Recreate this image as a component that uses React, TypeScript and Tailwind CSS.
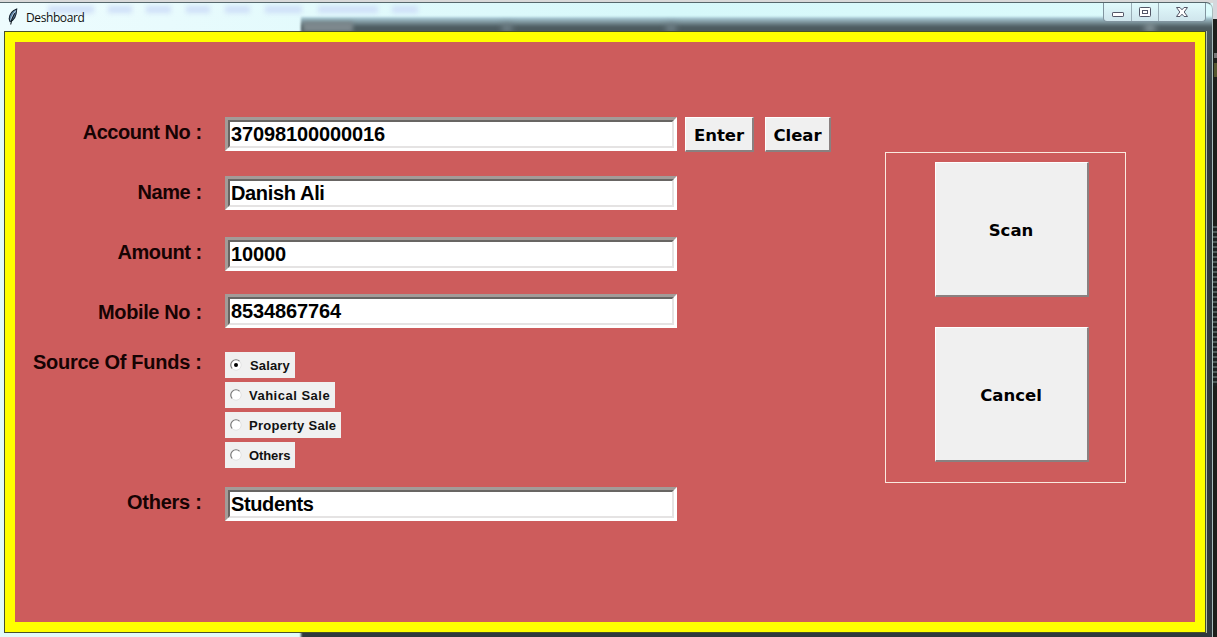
import { useState } from "react";

const labels = [
  { text: "Account No :", cls: "mt-[78px] tracking-[-0.45px]" },
  { text: "Name :", cls: "mt-9 tracking-[-0.4px]" },
  { text: "Amount :", cls: "mt-9 tracking-[-0.45px]" },
  { text: "Mobile No :", cls: "mt-9 tracking-[-0.37px]" },
  { text: "Source Of Funds :", cls: "mt-[26px] tracking-[-0.27px]" },
  { text: "Others :", cls: "mt-[116px] tracking-[-0.25px]" },
];

const sources = [
  { text: "Salary", cls: "w-[70px]", textCls: "ml-[8px] tracking-[0.15px]" },
  { text: "Vahical Sale", cls: "w-[110px]", textCls: "ml-[7px] tracking-[0.5px]" },
  { text: "Property Sale", cls: "w-[116px]", textCls: "ml-[7px] tracking-[0.27px]" },
  { text: "Others", cls: "w-[70px]", textCls: "ml-[7px] tracking-[-0.1px]" },
];

const menuGhosts = [
  "ml-[48px] w-[46px]",
  "ml-[14px] w-[24px]",
  "ml-[14px] w-[25px]",
  "ml-[15px] w-[24px]",
  "ml-[15px] w-[25px]",
  "ml-[15px] w-[37px]",
  "ml-[16px] w-[60px]",
  "ml-[14px] w-[26px]",
];

function Entry({ value, className, textClass }: { value: string; className: string; textClass: string }) {
  return (
    <div className={`h-[34px] w-[452px] border-[3px] border-t-[#a39b98] border-l-[#a39b98] border-r-white border-b-white ${className}`}>
      <div className="h-full border-2 border-t-[#686563] border-l-[#686563] border-r-[#e5e3e3] border-b-[#e5e3e3]">
        <input
          defaultValue={value}
          className={`block h-full w-full bg-white pl-px text-[20px] leading-6 font-bold text-black outline-none ${textClass}`}
        />
      </div>
    </div>
  );
}

function PushButton({ text, className }: { text: string; className: string }) {
  return (
    <button
      className={`flex items-center justify-center border-t border-l border-r-2 border-b-2 border-t-white border-l-white border-r-[#8a8080] border-b-[#8a8080] bg-[#f0f0f0] pt-[3px] font-['DejaVu_Sans',sans-serif] text-[16.5px] leading-5 font-bold text-black ${className}`}
    >
      {text}
    </button>
  );
}

function Radio({ checked }: { checked: boolean }) {
  return (
    <svg width="12" height="12" viewBox="0 0 12 12" className="ml-[5px]">
      <circle cx="6" cy="6" r="5" fill="#fff" />
      <path d="M2.3 9.7A5.2 5.2 0 0 1 9.7 2.3" fill="none" stroke="#777" strokeWidth="1.2" />
      <path d="M9.7 2.3A5.2 5.2 0 0 1 2.3 9.7" fill="none" stroke="#e3e3e3" strokeWidth="1" />
      {checked && <circle cx="6" cy="6" r="2" fill="#000" />}
    </svg>
  );
}

function Backdrop() {
  return (
    <div className="absolute inset-0 overflow-hidden bg-[#e2fafb]">
      <div className="absolute top-0 left-0 h-[3px] w-full bg-[#d9d9d9]" />
      <div className="absolute top-[3px] left-0 h-[29px] w-full bg-linear-to-r from-[#eefcfe] via-[#d6f8fa] via-55% to-[#dcfbfc]" />
      <div className="absolute top-[6px] left-0 flex blur-[2.5px]">
        {menuGhosts.map((g) => (
          <div key={g} className={`h-[7px] bg-[#cfdff8] ${g}`} />
        ))}
      </div>
      <div className="absolute top-[17px] left-[301px] h-[640px] w-[930px] bg-linear-to-b from-[#b3d5e1] via-[#4d5c60] via-[10px] to-[#30393e] to-[110px] blur-[1px]" />
      <div className="absolute top-[22px] left-[303px] h-[10px] w-[50px] bg-[#7e898e] blur-[2px]" />
      <div className="absolute top-[24px] left-[502px] h-[8px] w-[10px] bg-[#72828a] blur-[3px]" />
      <div className="absolute top-[24px] left-[666px] h-[8px] w-[10px] bg-[#72828a] blur-[3px]" />
      <div className="absolute top-[24px] left-[1145px] h-[8px] w-[10px] bg-[#8a999e] blur-[3px]" />
      <div className="absolute top-0 left-[1213px] h-[19px] w-1 bg-[#d5d7dc]" />
      <div className="absolute top-[19px] left-[1213px] h-[618px] w-1 bg-[#1d1f1b]" />
      <div className="absolute top-[53px] left-[1214px] h-[5px] w-[3px] bg-[#777]" />
      <div className="absolute top-[63px] left-[1214px] h-[14px] w-[3px] bg-[#56572f]" />
      <div className="absolute top-[226px] left-[1213px] h-[160px] w-1 bg-[repeating-linear-gradient(#4d5b58_0px,#4d5b58_2px,#1d2221_2px,#1d2221_5px)]" />
    </div>
  );
}

function Feather() {
  return (
    <svg width="12" height="18" viewBox="0 0 12 18" className="ml-[7px]">
      <path d="M9.7 1C5.2 2.6 2.4 6.4 2.2 10.8L3 13.5C7 12.5 9.4 7.4 9.7 1Z" fill="#5b83a8" stroke="#14202e" strokeWidth="1.1" />
      <path d="M8.8 2.6C6.4 5.4 4.6 9 3.7 12.4" fill="none" stroke="#d6e6f2" strokeWidth="0.9" />
      <path d="M7.7 5.2C5.7 8.6 4.2 12 3.7 16.5" fill="none" stroke="#101820" strokeWidth="1.1" />
    </svg>
  );
}

function Controls() {
  return (
    <div className="mr-[6px] flex h-[19px] w-[103px] rounded-b-[4px] border border-t-0 border-[#81949f] bg-linear-to-b from-[#e1fafc] to-[#cfe5ec]">
      <div className="w-7 border-r border-[#9aadb6]">
        <svg width="27" height="18" viewBox="0 0 27 18">
          <rect x="8.5" y="9.5" width="11" height="4" rx="0.6" fill="#fff" stroke="#535666" />
        </svg>
      </div>
      <div className="w-[27px] border-r border-[#9aadb6]">
        <svg width="26" height="18" viewBox="0 0 26 18">
          <rect x="7.5" y="4.5" width="11" height="9" rx="0.8" fill="#fff" stroke="#535666" />
          <rect x="10.5" y="7.5" width="5" height="3" fill="#fff" stroke="#535666" />
        </svg>
      </div>
      <svg width="46" height="18" viewBox="0 0 46 18">
        <path
          d="M17.5 4.5H21L23 6.8L25 4.5H28.5L25.2 9L28.5 13.5H25L23 11.2L21 13.5H17.5L20.8 9Z"
          fill="#fff"
          stroke="#535666"
          strokeLinejoin="round"
        />
      </svg>
    </div>
  );
}

export default function App() {
  const [source, setSource] = useState("Salary");
  return (
    <div className="relative h-[637px] w-[1217px] overflow-hidden font-['Liberation_Sans',Arial,sans-serif]">
      <Backdrop />
      <div className="relative mt-[2px] flex h-[635px] w-[1213px] flex-col rounded-tr-[7px] border-t border-r border-t-[#55666b] border-r-[#a8bcbc]">
        <div className="flex h-7 items-start justify-between">
          <div className="flex h-7 items-center">
            <Feather />
            <span className="ml-[7px] pt-px font-['Open_Sans',sans-serif] text-[12px] leading-4 tracking-[-0.4px] text-[#111]">Deshboard</span>
          </div>
          <Controls />
        </div>
        <div className="ml-1 flex h-[602px] w-[1203px] border-r border-[#b5c3a7]">
          <div className="flex h-[602px] w-[1202px] border border-[#48512c]">
            <main className="flex h-[600px] w-[1200px] border-10 border-[#ffff00] bg-[#cd5c5c]">
              <div className="flex w-[187px] flex-col items-end pr-[0.3px] text-right">
                {labels.map((l) => (
                  <label key={l.text} className={`h-6 text-[20px] leading-6 font-bold whitespace-nowrap text-[#160303] ${l.cls}`}>
                    {l.text}
                  </label>
                ))}
              </div>
              <div className="ml-[23px] flex w-[452px] flex-col">
                <Entry value="37098100000016" className="mt-[75px]" textClass="tracking-[-0.12px]" />
                <Entry value="Danish Ali" className="mt-[25px]" textClass="tracking-[-0.35px]" />
                <Entry value="10000" className="mt-[27px]" textClass="tracking-[-0.12px]" />
                <Entry value="8534867764" className="mt-[23px]" textClass="tracking-[-0.12px]" />
                <div className="mt-6 flex flex-col gap-1">
                  {sources.map((s) => (
                    <button
                      key={s.text}
                      onClick={() => setSource(s.text)}
                      className={`flex h-[26px] items-center bg-[#f0f0f0] ${s.cls}`}
                    >
                      <Radio checked={source === s.text} />
                      <span className={`pt-px text-[13px] leading-4 font-bold whitespace-nowrap text-[#111] ${s.textCls}`}>{s.text}</span>
                    </button>
                  ))}
                </div>
                <Entry value="Students" className="mt-[19px]" textClass="tracking-[-0.37px]" />
              </div>
              <div className="mt-[75px] ml-2 flex h-[35px] gap-[11px]">
                <PushButton text="Enter" className="h-[35px] w-[69px]" />
                <PushButton text="Clear" className="h-[35px] w-[66px]" />
              </div>
              <section className="mt-[110px] ml-[54px] flex h-[331px] w-[241px] flex-col items-center gap-[30px] border border-[#fae9df] pt-[9px] pl-[12px]">
                <PushButton text="Scan" className="h-[135px] w-[154px] shrink-0" />
                <PushButton text="Cancel" className="h-[135px] w-[154px] shrink-0" />
              </section>
            </main>
          </div>
        </div>
      </div>
    </div>
  );
}
